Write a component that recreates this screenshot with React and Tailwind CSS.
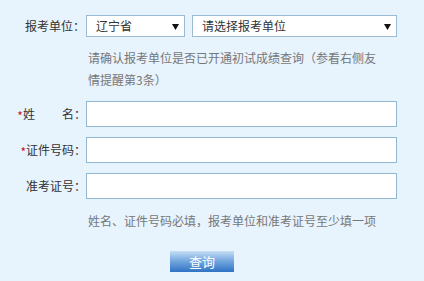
export default function App() {
  const font = { fontFamily: '"Noto Sans CJK SC", "Liberation Sans", sans-serif' };
  const Arrow = () => (
    <svg width="7" height="7" viewBox="0 0 7 7" className="block">
      <polygon points="0,1 7,1 3.5,7" fill="#111" />
    </svg>
  );
  return (
    <div className="w-[424px] h-[281px] bg-[#e7f3fd] text-[12px] overflow-hidden" style={font}>
      <div className="flex pt-[15px] h-[37px]">
        <div className="w-[86px] text-right leading-[22px] text-[#333] pr-[1px]">报考单位：</div>
        <div className="w-[99px] h-[22px] border border-[#99bbd6] bg-white flex items-center justify-between pl-[9px] pr-[5px] text-[#333]">
          <span className="leading-[20px]">辽宁省</span>
          <Arrow />
        </div>
        <div className="ml-[7px] w-[205px] h-[22px] border border-[#99bbd6] bg-white flex items-center justify-between pl-[9px] pr-[5px] text-[#333]">
          <span className="leading-[20px]">请选择报考单位</span>
          <Arrow />
        </div>
      </div>
      <div className="ml-[88px] mt-[10px] w-[292px] leading-[22px] text-[#777]">
        请确认报考单位是否已开通初试成绩查询（参看右侧友情提醒第3条）
      </div>
      <div className="flex flex-col gap-[10px] mt-[10px]">
        <div className="flex items-center h-[26px]">
          <div className="w-[86px] text-[#333] leading-[22px] flex justify-end">
            <span className="text-[#c8102e] translate-y-[2px]">*</span>
            <span>姓</span>
            <span className="inline-block w-[27px]"></span>
            <span>名：</span>
          </div>
          <div className="w-[311px] h-[26px] border border-[#94b7d2] bg-white"></div>
        </div>
        <div className="flex items-center h-[26px]">
          <div className="w-[86px] text-[#333] leading-[22px] flex justify-end">
            <span className="text-[#c8102e] translate-y-[2px]">*</span>
            <span>证件号码：</span>
          </div>
          <div className="w-[311px] h-[26px] border border-[#94b7d2] bg-white"></div>
        </div>
        <div className="flex items-center h-[26px]">
          <div className="w-[86px] text-[#333] leading-[22px] text-right">准考证号：</div>
          <div className="w-[311px] h-[26px] border border-[#94b7d2] bg-white"></div>
        </div>
      </div>
      <div className="ml-[88px] mt-[11px] leading-[22px] text-[#777]">
        姓名、证件号码必填，报考单位和准考证号至少填一项
      </div>
      <div className="ml-[170px] mt-[19px] w-[64px] h-[21px] bg-gradient-to-b from-[#c6def5] via-[#6fa4dd] to-[#2f73c4] text-white text-center leading-[21px] text-[13px]">
        查询
      </div>
    </div>
  );
}
